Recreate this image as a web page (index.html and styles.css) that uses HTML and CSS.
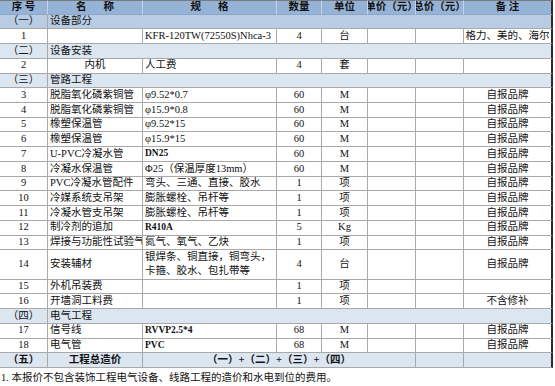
FILE: index.html
```html
<!DOCTYPE html>
<html lang="zh-CN">
<head>
<meta charset="utf-8">
<title>报价单</title>
<link rel="stylesheet" href="styles.css">
</head>
<body>
<div class="sheet">
  <div class="c hd ctr">序 号</div>
  <div class="c hd ctr"><span class="wide">名</span>称</div>
  <div class="c hd ctr"><span class="wide">规</span>格</div>
  <div class="c hd ctr">数量</div>
  <div class="c hd ctr">单位</div>
  <div class="c hd ctr">单价（元）</div>
  <div class="c hd ctr">总价（元）</div>
  <div class="c hd ctr last">备 注</div>

  <div class="c sec1 ctr">（一）</div>
  <div class="c sec1 span7 last">设备部分</div>

  <div class="c ctr">1</div><div class="c"></div><div class="c">KFR-120TW(72550S)Nhca-3</div><div class="c ctr">4</div><div class="c ctr">台</div><div class="c"></div><div class="c"></div><div class="c ctr last">格力、美的、海尔</div>

  <div class="c sec ctr">（二）</div>
  <div class="c sec span7 last">设备安装</div>

  <div class="c ctr">2</div><div class="c ctr">内机</div><div class="c">人工费</div><div class="c ctr">4</div><div class="c ctr">套</div><div class="c"></div><div class="c"></div><div class="c ctr last"></div>

  <div class="c sec ctr">（三）</div>
  <div class="c sec span7 last">管路工程</div>

  <div class="c ctr">3</div><div class="c">脱脂氧化磷紫铜管</div><div class="c">φ9.52*0.7</div><div class="c ctr">60</div><div class="c ctr">M</div><div class="c"></div><div class="c"></div><div class="c ctr last">自报品牌</div>
  <div class="c ctr">4</div><div class="c">脱脂氧化磷紫铜管</div><div class="c">φ15.9*0.8</div><div class="c ctr">60</div><div class="c ctr">M</div><div class="c"></div><div class="c"></div><div class="c ctr last">自报品牌</div>
  <div class="c ctr">5</div><div class="c">橡塑保温管</div><div class="c">φ9.52*15</div><div class="c ctr">60</div><div class="c ctr">M</div><div class="c"></div><div class="c"></div><div class="c ctr last">自报品牌</div>
  <div class="c ctr">6</div><div class="c">橡塑保温管</div><div class="c">φ15.9*15</div><div class="c ctr">60</div><div class="c ctr">M</div><div class="c"></div><div class="c"></div><div class="c ctr last">自报品牌</div>
  <div class="c ctr">7</div><div class="c">U-PVC冷凝水管</div><div class="c b">DN25</div><div class="c ctr">60</div><div class="c ctr">M</div><div class="c"></div><div class="c"></div><div class="c ctr last">自报品牌</div>
  <div class="c ctr">8</div><div class="c">冷凝水保温管</div><div class="c">Φ25（保温厚度13mm）</div><div class="c ctr">60</div><div class="c ctr">M</div><div class="c"></div><div class="c"></div><div class="c ctr last">自报品牌</div>
  <div class="c ctr">9</div><div class="c">PVC冷凝水管配件</div><div class="c">弯头、三通、直接、胶水</div><div class="c ctr">1</div><div class="c ctr">项</div><div class="c"></div><div class="c"></div><div class="c ctr last">自报品牌</div>
  <div class="c ctr">10</div><div class="c">冷媒系统支吊架</div><div class="c">膨胀螺栓、吊杆等</div><div class="c ctr">1</div><div class="c ctr">项</div><div class="c"></div><div class="c"></div><div class="c ctr last">自报品牌</div>
  <div class="c ctr">11</div><div class="c">冷凝水管支吊架</div><div class="c">膨胀螺栓、吊杆等</div><div class="c ctr">1</div><div class="c ctr">项</div><div class="c"></div><div class="c"></div><div class="c ctr last">自报品牌</div>
  <div class="c ctr">12</div><div class="c">制冷剂的追加</div><div class="c b">R410A</div><div class="c ctr">5</div><div class="c ctr">Kg</div><div class="c"></div><div class="c"></div><div class="c ctr last">自报品牌</div>
  <div class="c ctr">13</div><div class="c">焊接与功能性试验气</div><div class="c">氮气、氧气、乙炔</div><div class="c ctr">1</div><div class="c ctr">项</div><div class="c"></div><div class="c"></div><div class="c ctr last">自报品牌</div>
  <div class="c ctr tall">14</div><div class="c tall">安装辅材</div><div class="c tall multi">银焊条、铜直接，铜弯头，<br>卡箍、胶水、包扎带等</div><div class="c ctr tall">4</div><div class="c ctr tall">台</div><div class="c tall"></div><div class="c tall"></div><div class="c ctr tall last">自报品牌</div>
  <div class="c ctr">15</div><div class="c">外机吊装费</div><div class="c"></div><div class="c ctr">1</div><div class="c ctr">项</div><div class="c"></div><div class="c"></div><div class="c ctr last"></div>
  <div class="c ctr">16</div><div class="c">开墙洞工料费</div><div class="c"></div><div class="c ctr">1</div><div class="c ctr">项</div><div class="c"></div><div class="c"></div><div class="c ctr last">不含修补</div>

  <div class="c sec ctr">（四）</div>
  <div class="c sec span7 last">电气工程</div>

  <div class="c ctr">17</div><div class="c">信号线</div><div class="c b">RVVP2.5*4</div><div class="c ctr">68</div><div class="c ctr">M</div><div class="c"></div><div class="c"></div><div class="c ctr last">自报品牌</div>
  <div class="c ctr">18</div><div class="c">电气管</div><div class="c b">PVC</div><div class="c ctr">68</div><div class="c ctr">M</div><div class="c"></div><div class="c"></div><div class="c ctr last">自报品牌</div>

  <div class="c sec ctr strong">（五）</div>
  <div class="c sec ctr strong">工程总造价</div>
  <div class="c sec ctr strong span4">（一）+（二）+（三）+（四）</div>
  <div class="c sec"></div>
  <div class="c sec last"></div>
</div>
<div class="note">1. 本报价不包含装饰工程电气设备、线路工程的造价和水电到位的费用。</div>
</body>
</html>
```

FILE: styles.css
```css
html, body {
  margin: 0;
  padding: 0;
  background: #ffffff;
}

body {
  font-family: "Liberation Serif", "Noto Sans CJK SC", serif;
  font-size: 10.5px;
  color: #111111;
  width: 555px;
  height: 386px;
  overflow: hidden;
}

.sheet {
  display: grid;
  grid-template-columns: 48px 95px 134px 45px 46px 48px 48px 89px;
  grid-auto-rows: 14.72px;
  width: 553px;
}

.c {
  box-sizing: border-box;
  display: flex;
  align-items: center;
  padding: 0 2px;
  border-right: 1px solid #a9a9a9;
  border-bottom: 1px solid #a9a9a9;
  overflow: hidden;
  white-space: nowrap;
  line-height: 1;
  background: #ffffff;
}

.ctr {
  justify-content: center;
}

.last {
  border-right: 2px solid #2b2b2b;
}

.hd {
  background: #95b3d7;
  font-weight: bold;
  border-top: 1px solid #7a7a7a;
  border-right-color: #c4d3e6;
  border-bottom-color: #8ea7c6;
}

.hd.last {
  border-right-color: #2b2b2b;
}

.wide {
  margin-right: 17px;
}

.sec1 {
  background: #b8cce4;
}

.sec {
  background: #dce6f1;
}

.span7 {
  grid-column: span 7;
}

.span4 {
  grid-column: span 4;
}

.tall {
  grid-row: span 2;
}

.multi {
  white-space: normal;
  line-height: 14px;
  align-items: center;
}

.b {
  font-weight: bold;
  font-size: 9.5px;
}

.strong {
  font-weight: bold;
}

.note {
  height: 18px;
  display: flex;
  align-items: center;
  padding-left: 1px;
  font-size: 10.5px;
  white-space: nowrap;
}
```
